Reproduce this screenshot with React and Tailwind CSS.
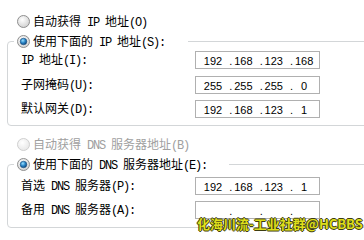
import React from 'react';

// split a label into CJK / latin runs so the latin part gets the half-width mono look
function Txt({ s }) {
  const runs = [];
  for (const ch of s) {
    const wide = ch.charCodeAt(0) > 0x2e80;
    const last = runs[runs.length - 1];
    if (last && last.wide === wide) last.text += ch;
    else runs.push({ wide, text: ch });
  }
  return (
    <span className="whitespace-pre">
      {runs.map((r, i) =>
        r.wide ? (
          <span key={i}>{r.text}</span>
        ) : (
          <span key={i} className="font-['Liberation_Mono',monospace] tracking-[-1.2px]">{r.text}</span>
        )
      )}
    </span>
  );
}

function Radio({ checked, disabled, id }) {
  const ring = disabled ? '#cfcfcf' : '#8f8f8f';
  return (
    <svg width="13" height="13" viewBox="0 0 13 13" className="shrink-0">
      <defs>
        <radialGradient id={`bg-${id}`} cx="0.4" cy="0.35" r="0.7">
          <stop offset="0" stopColor="#ffffff" />
          <stop offset="1" stopColor={disabled ? '#e6e6e6' : '#cfcfcf'} />
        </radialGradient>
        <radialGradient id={`dot-${id}`} cx="0.4" cy="0.35" r="0.7">
          <stop offset="0" stopColor="#9be0ff" />
          <stop offset="0.5" stopColor="#2a86c8" />
          <stop offset="1" stopColor="#0b3f73" />
        </radialGradient>
      </defs>
      <circle cx="6.5" cy="6.5" r="6" fill={`url(#bg-${id})`} stroke={ring} strokeWidth="1" />
      {checked && <circle cx="6.5" cy="6.5" r="3.3" fill={`url(#dot-${id})`} stroke="#1b4f80" strokeWidth="0.6" />}
    </svg>
  );
}

function IpBox({ parts }) {
  return (
    <div className="h-[18px] w-[125px] border border-[#b0b0b0] bg-white flex items-center pl-[6px] pt-[2px] font-['Liberation_Sans',sans-serif] text-[11px] leading-none">
      {parts.map((p, i) => (
        <React.Fragment key={i}>
          {i > 0 && <span className="w-[8.4px] text-right">.</span>}
          <span className="w-[22px] text-center">{p}</span>
        </React.Fragment>
      ))}
    </div>
  );
}

function Row({ label, parts, className = '' }) {
  return (
    <div className={`grid grid-cols-[174px_125px] items-center h-[18px] ${className}`}>
      <Txt s={label} />
      <IpBox parts={parts} />
    </div>
  );
}

export default function App() {
  return (
    <div className="relative w-[364px] h-[240px] overflow-hidden bg-white text-black font-['Noto_Sans_CJK_SC',sans-serif] text-[12px] leading-[13px]">
      <div className="pt-[15px]">
        <div className="flex items-center h-[13px] pl-[17px] gap-[3px]">
          <Radio id="r1" />
          <Txt s="自动获得 IP 地址(O)" />
        </div>

        <fieldset className="ml-[7px] mt-[7px] w-[380px] min-w-0 border border-[#d3d6d8] rounded-[4px] pt-[3px] pb-[7px]">
          <legend className="ml-[6px] w-[174px] h-[13px] flex items-center pl-[3px] gap-[3px]">
            <Radio id="r2" checked />
            <Txt s="使用下面的 IP 地址(S):" />
          </legend>
          <div className="pl-[13px]">
            <Row label="IP 地址(I):" parts={['192', '168', '123', '168']} />
            <Row label="子网掩码(U):" parts={['255', '255', '255', '0']} className="mt-[7px]" />
            <Row label="默认网关(D):" parts={['192', '168', '123', '1']} className="mt-[6px]" />
          </div>
        </fieldset>

        <div className="flex items-center h-[13px] pl-[17px] gap-[3px] mt-[12px] text-[#a0a0a0]">
          <Radio id="r3" disabled />
          <Txt s="自动获得 DNS 服务器地址(B)" />
        </div>

        <fieldset className="ml-[7px] mt-[7px] w-[380px] min-w-0 border border-[#d3d6d8] rounded-[4px] pt-[6px] pb-[8px]">
          <legend className="ml-[6px] w-[215px] h-[13px] flex items-center pl-[3px] gap-[3px]">
            <Radio id="r4" checked />
            <Txt s="使用下面的 DNS 服务器地址(E):" />
          </legend>
          <div className="pl-[13px]">
            <Row label="首选 DNS 服务器(P):" parts={['192', '168', '123', '1']} />
            <Row label="备用 DNS 服务器(A):" parts={['', '', '', '']} className="mt-[6px]" />
          </div>
        </fieldset>
      </div>

      <div className="absolute left-[197px] top-[218px] font-['Noto_Sans_CJK_SC',sans-serif] font-bold text-[13px] leading-[12px] text-[#dede1c] whitespace-nowrap [text-shadow:1px_0_0_#3c3c10,-1px_0_0_#3c3c10,0_1px_0_#3c3c10,0_-1px_0_#3c3c10]">
        化海川流-工业社群@HCBBS
      </div>
    </div>
  );
}
